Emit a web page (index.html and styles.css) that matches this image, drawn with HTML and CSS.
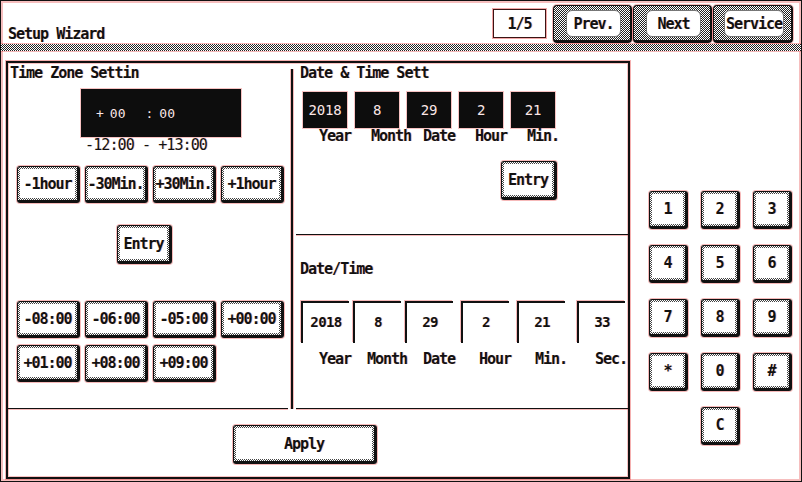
FILE: index.html
```html
<!DOCTYPE html>
<html lang="en">
<head>
    <meta charset="UTF-8">
    <meta name="viewport" content="width=device-width, initial-scale=1.0">
    <title>Setup Wizard</title>
    <link rel="stylesheet" href="styles.css">
</head>
<body>
    <div class="screen">
        <header class="topbar">
            <h1 class="title">Setup Wizard</h1>
            <div class="counter">1/5</div>
            <nav class="nav">
                <button class="nav-btn"><span>Prev.</span></button>
                <button class="nav-btn"><span>Next</span></button>
                <button class="nav-btn wide"><span>Service</span></button>
            </nav>
        </header>
        <div class="band"></div>

        <div class="content">
            <main class="panel">
                <div class="panel-top">
                    <!-- time zone -->
                    <section class="tz">
                        <h2 class="heading">Time Zone Settin</h2>
                        <div class="tz-display">
                            <span class="sign">+</span><span class="hh">00</span><span class="colon">:</span><span class="mm">00</span>
                        </div>
                        <div class="tz-range">-12:00 - +13:00</div>
                        <div class="btn-row step-row">
                            <button class="btn step">-1hour</button>
                            <button class="btn step">-30Min.</button>
                            <button class="btn step">+30Min.</button>
                            <button class="btn step">+1hour</button>
                        </div>
                        <button class="btn entry tz-entry">Entry</button>
                        <div class="zone-grid">
                            <button class="btn step">-08:00</button>
                            <button class="btn step">-06:00</button>
                            <button class="btn step">-05:00</button>
                            <button class="btn step">+00:00</button>
                            <button class="btn step">+01:00</button>
                            <button class="btn step">+08:00</button>
                            <button class="btn step">+09:00</button>
                        </div>
                    </section>

                    <div class="vline"></div>

                    <section class="dt">
                        <div class="dt-set">
                            <h2 class="heading">Date &amp; Time Sett</h2>
                            <div class="field-row">
                                <div class="field"><div class="field-box">2018</div><div class="field-label">Year</div></div>
                                <div class="field"><div class="field-box">8</div><div class="field-label">Month</div></div>
                                <div class="field"><div class="field-box">29</div><div class="field-label">Date</div></div>
                                <div class="field"><div class="field-box">2</div><div class="field-label">Hour</div></div>
                                <div class="field"><div class="field-box">21</div><div class="field-label">Min.</div></div>
                            </div>
                            <button class="btn entry dt-entry">Entry</button>
                        </div>
                        <div class="dt-now">
                            <h2 class="heading">Date/Time</h2>
                            <div class="now-row">
                                <div class="now"><div class="now-box">2018</div><div class="now-label">Year</div></div>
                                <div class="now"><div class="now-box">8</div><div class="now-label">Month</div></div>
                                <div class="now"><div class="now-box">29</div><div class="now-label">Date</div></div>
                                <div class="now gap-l"><div class="now-box">2</div><div class="now-label">Hour</div></div>
                                <div class="now gap-l"><div class="now-box">21</div><div class="now-label">Min.</div></div>
                                <div class="now gap-xl"><div class="now-box">33</div><div class="now-label">Sec.</div></div>
                            </div>
                        </div>
                    </section>
                </div>
                <div class="panel-foot">
                    <button class="btn apply">Apply</button>
                </div>
            </main>

            <aside class="keypad">
                <button class="btn key">1</button>
                <button class="btn key">2</button>
                <button class="btn key">3</button>
                <button class="btn key">4</button>
                <button class="btn key">5</button>
                <button class="btn key">6</button>
                <button class="btn key">7</button>
                <button class="btn key">8</button>
                <button class="btn key">9</button>
                <button class="btn key">*</button>
                <button class="btn key">0</button>
                <button class="btn key">#</button>
                <button class="btn key key-c">C</button>
            </aside>
        </div>
    </div>
</body>
</html>
```

FILE: styles.css
```css
* {
    box-sizing: border-box;
}
body {
    margin: 0;
    background: #fff;
    font-family: "DejaVu Sans Mono", "Liberation Mono", monospace;
    color: #111;
}
.screen {
    width: 802px;
    height: 482px;
    border: 1px solid #111;
    box-shadow: inset 0 0 0 2px rgba(236, 110, 110, 0.45);
    display: flex;
    flex-direction: column;
    overflow: hidden;
}

/* shared LCD text */
.title, .counter, .nav-btn, .heading, .tz-range, .btn, .field-label, .now-label, .now-box {
    font-family: "DejaVu Sans Mono", monospace;
    font-weight: bold;
    font-size: 15px;
    letter-spacing: -1px;
    line-height: 16px;
    color: #111;
    text-shadow: 1px 0 rgba(232, 80, 80, 0.3);
}

/* top bar */
.topbar {
    height: 43px;
    display: flex;
    align-items: flex-start;
}
.title {
    margin: 25px 0 0 7px;
}
.counter {
    margin: 8px 7px 0 auto;
    width: 53px;
    height: 29px;
    border: 1px solid #3a1414;
    box-shadow: 0 0 0 1px rgba(232, 80, 80, 0.5);
    display: flex;
    align-items: center;
    justify-content: center;
}
.nav {
    display: flex;
    gap: 1px;
    margin: 4px 8px 0 0;
}
.nav-btn {
    width: 79px;
    height: 38px;
    padding: 4px 9px 3px 12px;
    border: 1px solid #111;
    border-bottom-width: 3px;
    border-right-width: 2px;
    border-radius: 4px;
    background: repeating-conic-gradient(#222 0 25%, #fff 0 50%) 0 0 / 2px 2px;
    box-shadow: 0 0 0 1px rgba(232, 80, 80, 0.4);
}
.nav-btn.wide {
    width: 80px;
    padding-left: 10px;
    padding-right: 7px;
}
.nav-btn span {
    display: flex;
    height: 100%;
    align-items: center;
    justify-content: center;
    background: #fff;
    border-radius: 6px;
    border: 1px solid #777;
    white-space: nowrap;
}
.band {
    height: 7px;
    background: repeating-conic-gradient(#222 0 25%, #fff 0 50%) 0 0 / 2px 2px;
    box-shadow: 0 -1px 0 rgba(232, 80, 80, 0.4), 0 1px 0 rgba(232, 80, 80, 0.4);
}

/* main area */
.content {
    flex: 1;
    display: flex;
    padding-top: 10px;
}
.panel {
    width: 624px;
    height: 418px;
    margin-left: 5px;
    border: 2px solid #111;
    box-shadow: 0 0 0 1px rgba(232, 80, 80, 0.45), inset 0 0 0 1px rgba(232, 80, 80, 0.35);
    display: flex;
    flex-direction: column;
}
.panel-top {
    height: 346px;
    display: flex;
}
.heading {
    margin: 2px 0 0;
}

/* buttons */
.btn {
    padding: 2px;
    border: 1px solid #111;
    border-right-width: 3px;
    border-bottom-width: 3px;
    border-radius: 3px;
    background: linear-gradient(#fff, #fff) content-box, repeating-conic-gradient(#444 0 25%, #fff 0 50%) 0 0 / 2px 2px;
    box-shadow: 0 0 0 1px rgba(232, 80, 80, 0.4);
    display: flex;
    align-items: center;
    justify-content: center;
    white-space: nowrap;
}
.step {
    width: 63px;
    height: 37px;
}
.entry {
    width: 55px;
    height: 39px;
}

/* time zone column */
.tz {
    width: 280px;
    margin-right: 3px;
    border-bottom: 1px solid #111;
    box-shadow: 0 1px 0 rgba(232, 80, 80, 0.4);
}
.tz .heading {
    padding-left: 2px;
}
.tz-display {
    width: 160px;
    height: 48px;
    margin: 8px 0 0 73px;
    background: #0d0d0d;
    color: #fbe6e6;
    font-size: 13px;
    display: flex;
    align-items: center;
    padding-left: 15px;
    box-shadow: 0 0 0 1px rgba(232, 80, 80, 0.35);
}
.tz-display .hh {
    margin-left: 6px;
}
.tz-display .colon {
    margin-left: 20px;
}
.tz-display .mm {
    margin-left: 6px;
}
.tz-range {
    margin-left: 77px;
    font-weight: normal;
    letter-spacing: -0.9px;
}
.btn-row {
    display: flex;
    gap: 5px;
    margin: 13px 0 0 9px;
}
.tz-entry {
    margin: 22px 0 0 109px;
}
.zone-grid {
    display: grid;
    grid-template-columns: repeat(4, 63px);
    gap: 7px 5px;
    margin: 37px 0 0 9px;
}

.vline {
    width: 2px;
    margin-top: 6px;
    background: #111;
    box-shadow: 1px 0 0 rgba(232, 80, 80, 0.4), -1px 0 0 rgba(232, 80, 80, 0.4);
}

/* date & time column */
.dt {
    width: 332px;
    margin-left: 3px;
    display: flex;
    flex-direction: column;
}
.dt .heading {
    padding-left: 4px;
}
.dt-set {
    height: 172px;
    border-bottom: 1px solid #111;
    box-shadow: 0 1px 0 rgba(232, 80, 80, 0.4);
}
.field-row {
    display: flex;
    gap: 8px;
    margin: 11px 0 0 7px;
}
.field {
    width: 44px;
}
.field-box {
    height: 36px;
    background: #0d0d0d;
    color: #fbe6e6;
    font-size: 14px;
    letter-spacing: -0.2px;
    display: flex;
    align-items: center;
    justify-content: center;
    box-shadow: 0 0 0 1px rgba(232, 80, 80, 0.35);
}
.field-label {
    margin-left: 16px;
    white-space: nowrap;
}
.dt-entry {
    width: 56px;
    margin: 17px 0 0 205px;
}

.dt-now {
    flex: 1;
    border-bottom: 1px solid #111;
    box-shadow: 0 1px 0 rgba(232, 80, 80, 0.4);
}
.dt-now .heading {
    margin-top: 26px;
}
.now-row {
    display: flex;
    gap: 4px;
    margin: 24px 0 0 5px;
}
.now {
    width: 48px;
}
.now.gap-l {
    margin-left: 4px;
}
.now.gap-xl {
    margin-left: 8px;
}
.now-box {
    height: 42px;
    border-top: 2px solid #111;
    border-left: 2px solid #111;
    padding-top: 11px;
    font-size: 14px;
    letter-spacing: -0.6px;
    text-align: center;
    box-shadow: -1px -1px 0 rgba(232, 80, 80, 0.4);
}
.now-label {
    width: 48px;
    margin: 8px 0 0 10px;
    text-align: center;
    white-space: nowrap;
}

.panel-foot {
    flex: 1;
}
.apply {
    width: 144px;
    height: 39px;
    margin: 16px 0 0 225px;
}

/* keypad */
.keypad {
    display: grid;
    grid-template-columns: repeat(3, 39px);
    grid-auto-rows: 38px;
    gap: 16px 13px;
    margin: 130px 0 0 19px;
    align-content: start;
}
.key-c {
    grid-column: 2;
}
```
